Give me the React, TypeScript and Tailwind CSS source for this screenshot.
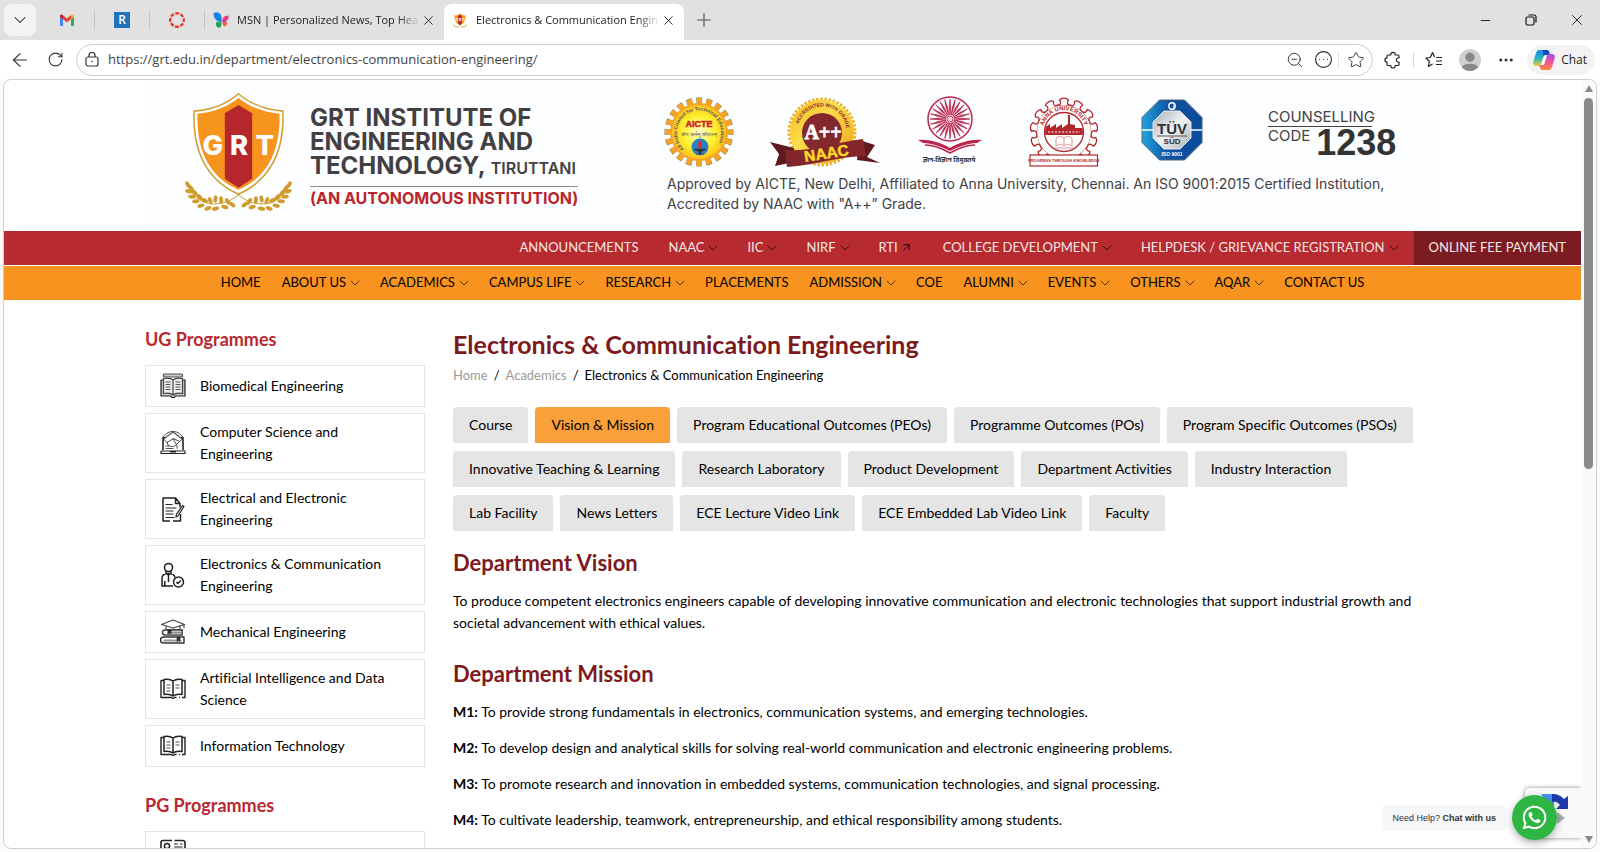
import type { ReactNode } from "react";
import {
  ArrowLeft,
  ArrowUpRight,
  ChevronDown,
  CircleEllipsis,
  Ellipsis,
  Minus,
  Plus,
  RotateCw,
  Star,
  X,
  ZoomOut,
} from "lucide-react";
import { FaWhatsapp } from "react-icons/fa";

type NavItem = { label: string; icon?: "down" | "out" };

const TOP_LINKS: NavItem[] = [
  { label: "ANNOUNCEMENTS" },
  { label: "NAAC", icon: "down" },
  { label: "IIC", icon: "down" },
  { label: "NIRF", icon: "down" },
  { label: "RTI", icon: "out" },
  { label: "COLLEGE DEVELOPMENT", icon: "down" },
  { label: "HELPDESK / GRIEVANCE REGISTRATION", icon: "down" },
];

const MAIN_LINKS: NavItem[] = [
  { label: "HOME" },
  { label: "ABOUT US", icon: "down" },
  { label: "ACADEMICS", icon: "down" },
  { label: "CAMPUS LIFE", icon: "down" },
  { label: "RESEARCH", icon: "down" },
  { label: "PLACEMENTS" },
  { label: "ADMISSION", icon: "down" },
  { label: "COE" },
  { label: "ALUMNI", icon: "down" },
  { label: "EVENTS", icon: "down" },
  { label: "OTHERS", icon: "down" },
  { label: "AQAR", icon: "down" },
  { label: "CONTACT US" },
];

const TABS = [
  "Course",
  "Vision & Mission",
  "Program Educational Outcomes (PEOs)",
  "Programme Outcomes (POs)",
  "Program Specific Outcomes (PSOs)",
  "Innovative Teaching & Learning",
  "Research Laboratory",
  "Product Development",
  "Department Activities",
  "Industry Interaction",
  "Lab Facility",
  "News Letters",
  "ECE Lecture Video Link",
  "ECE Embedded Lab Video Link",
  "Faculty",
];

const MISSIONS = [
  "To provide strong fundamentals in electronics, communication systems, and emerging technologies.",
  "To develop design and analytical skills for solving real-world communication and electronic engineering problems.",
  "To promote research and innovation in embedded systems, communication technologies, and signal processing.",
  "To cultivate leadership, teamwork, entrepreneurship, and ethical responsibility among students.",
];

/* ---------- programme icons ---------- */

const LineIcon = ({ children }: { children: ReactNode }) => (
  <svg
    viewBox="0 0 26 26"
    className="h-[26px] w-[26px] shrink-0"
    fill="none"
    stroke="#222"
    strokeWidth="1.2"
    strokeLinejoin="round"
    aria-hidden="true"
  >
    {children}
  </svg>
);

const ManualIcon = () => (
  <LineIcon>
    <rect x="3.5" y="1" width="19" height="3" rx="1" fill="#c8c8cc" stroke="#555" />
    <path d="M3 7H1v16h9.500l1 1.500h3l1-1.500H25V7h-2" fill="#c8c8cc" />
    <path d="M3.500 5.500c4-.8 7.500-.5 9.500 1.500 2-2 5.500-2.300 9.500-1.500v15c-4-.8-7.500-.5-9.500 1.500-2-2-5.500-2.300-9.500-1.500zM13 7v15" fill="#eee" stroke="#444" />
    <path d="M5.500 9h5M5.500 11.500h5M5.500 14h5M5.500 16.500h5M15.500 9h5M15.500 11.500h5M15.500 14h5M15.500 16.500h5" stroke="#555" strokeWidth="1" />
  </LineIcon>
);

const LaptopIcon = () => (
  <LineIcon>
    <path d="M3 20V9.500L13 2l10 7.500V20" stroke="#555" />
    <path d="M3 20V7.500h2M23 20V7.500h-2M1 21h24v2.500H1zM10 22h6" />
    <path d="M2.500 8C6 2.500 10 1.500 13 1.500S20 2.500 23.500 8l-4 3.500-6-3-6.500 4zM7 12l1 3c3 2 6 2 8 0l3.500-3.500M13 8.500l4 7v3" stroke="#333" strokeWidth=".9" />
    <path d="M5.500 16h4M5.500 18.500h8" stroke="#555" />
  </LineIcon>
);

const NotesIcon = () => (
  <LineIcon>
    <path d="M20 7.500 15.500 2H3v23h7M13 25h7.500v-7M15.500 2v5.500H20v4" strokeWidth="1.500" />
    <path d="M5.500 8.500h7M5.500 12h11M5.500 15h8M5.500 18h8M5.500 21.500h9" />
    <path d="m22.500 9.500 1.500 1-6 9.500-2 1 .3-2.300z" />
  </LineIcon>
);

const PersonIcon = () => (
  <LineIcon>
    <circle cx="8.500" cy="5.500" r="4" strokeWidth="1.600" />
    <path d="M6 9v3M11 9v3M13 24H2v-7.500C2 13 5 11.500 8.500 11.500s6 1.500 6.500 4M8.500 12v8M4.800 19v5" strokeWidth="1.500" />
    <path d="m7 11.500 1.500 2 1.500-2z" fill="#222" />
    <circle cx="18.500" cy="20" r="5" strokeWidth="1.500" />
    <path d="m16.300 20 1.600 1.600 3-3.200" strokeWidth="1.400" />
  </LineIcon>
);

const BooksIcon = () => (
  <LineIcon>
    <path d="M1.500 5.500 13 1l11.500 4.500L13 9zM6 7.500v3h14v-3M24 5.500V9" stroke="#444" />
    <path d="M23 11H5a2.500 2.500 0 0 0 0 5h18M22 11v5" stroke="#444" strokeWidth="1.500" />
    <path d="M7 13.500h14" stroke="#888" strokeWidth="2" />
    <path d="M24.500 18H3.500a3 3 0 0 0 0 6h21M24 18v6" stroke="#333" strokeWidth="1.500" />
    <path d="M3.500 21.500h18" stroke="#999" strokeWidth="2" />
    <path d="M8 11v4l1.500-1 1.500 1v-4zM17 18v4.500l1.500-1 1.500 1V18z" fill="#333" strokeWidth=".5" />
  </LineIcon>
);

const OpenBookIcon = () => (
  <LineIcon>
    <path d="M4 4.500H1v17h10.500l1.500 1 1.500-1h2M19 21.500h1M22 21.500h3v-17h-3" strokeWidth="1.400" />
    <path d="M4 18.500v-15c4-.8 7 0 9 1.500 2-1.500 5-2.300 9-1.500v15c-4-.5-7 0-9 1.500-2-1.500-5-2-9-1.500zM13 5v15" strokeWidth="1.500" />
    <path d="M6.500 9h4M6.500 12h4M6.500 15h4M15.500 9h4M15.500 12h4" stroke="#555" strokeWidth="1.100" />
  </LineIcon>
);

const CertificateIcon = () => (
  <LineIcon>
    <path d="M1 25V3.500C1 2 2 1.500 3 1.500h9M14.500 1.500h8c1.500 0 2.500.5 2.500 2V25" strokeWidth="1.600" />
    <circle cx="7" cy="7" r="2.600" strokeWidth="1.500" />
    <path d="M14 5h4M20 5h2.500M14 8h8.500M4 14c1-3 5-3 6 0" />
  </LineIcon>
);

const UG_PROGRAMMES = [
  { name: "Biomedical Engineering", Icon: ManualIcon },
  { name: "Computer Science and Engineering", Icon: LaptopIcon },
  { name: "Electrical and Electronic Engineering", Icon: NotesIcon },
  { name: "Electronics & Communication Engineering", Icon: PersonIcon },
  { name: "Mechanical Engineering", Icon: BooksIcon },
  { name: "Artificial Intelligence and Data Science", Icon: OpenBookIcon },
  { name: "Information Technology", Icon: OpenBookIcon },
];

/* ---------- logos ---------- */

const LAUREL_LEAVES = [
  [143, 314, 60], [154, 326, 60], [146, 334, 15], [164, 338, 50], [155, 350, 5],
  [178, 351, 45], [167, 364, -5], [193, 361, 30], [182, 377, -15], [210, 362, 70],
  [203, 385, -20], [226, 357, 100], [226, 386, -15], [243, 360, 85], [254, 381, 15],
  [262, 364, 60], [276, 374, 35],
];

const Shield = ({ className }: { className: string }) => (
  <svg viewBox="135 36 320 360" className={className} aria-hidden="true">
    {["", "translate(590 0) scale(-1 1)"].map((transform) => (
      <g key={transform} transform={transform}>
        {LAUREL_LEAVES.map(([x, y, r]) => (
          <ellipse key={`${x}-${y}`} cx={x} cy={y} rx="11" ry="6" fill="#cf9c2e" transform={`rotate(${r} ${x} ${y})`} />
        ))}
        <path d="M142 312c10 32 40 60 78 60 30 0 55-10 82-32" fill="none" stroke="#cf9c2e" strokeWidth="3" />
      </g>
    ))}
    <path d="M295 39c38 32 84 50 135 52 6 110-28 206-135 254C188 297 154 201 160 91c51-2 97-20 135-52z" fill="#cf9c2e" />
    <path d="M295 44c38 31 82 48 131 51 4 106-29 199-131 245C193 294 160 201 164 95c49-3 93-20 131-51z" fill="#fff" />
    <path d="M295 54c36 28 76 43 123 47 3 100-28 187-123 228C200 288 169 201 172 101c47-4 87-19 123-47z" fill="#f7941d" />
    <path d="m295 75 41 25v196l-41 27-41-27V100z" fill="#b5272d" />
    <g fill="#fff" fontFamily="Inter, sans-serif" fontSize="82" fontWeight="800" textAnchor="middle">
      <text x="218" y="225">G</text>
      <text x="297" y="225">R</text>
      <text x="374" y="225">T</text>
    </g>
  </svg>
);

const AicteBadge = () => (
  <svg viewBox="-35 -36 70 72" className="h-[72px] w-[70px]" aria-hidden="true">
    <defs>
      <radialGradient id="aicte">
        <stop offset="0" stopColor="#fffbd0" />
        <stop offset=".6" stopColor="#fff12e" />
        <stop offset="1" stopColor="#f9c41b" />
      </radialGradient>
      <path id="aicte-arc" d="M-14 17.500A22 22 0 1 1 14 17.500" />
    </defs>
    <circle r="31" fill="none" stroke="#8a7a50" strokeWidth="7" strokeDasharray="5.700 4.040" strokeDashoffset="2.850" />
    <circle r="31" fill="none" stroke="#f5a326" strokeWidth="6" strokeDasharray="5.200 4.540" strokeDashoffset="2.600" />
    <circle r="29" fill="#f5a326" />
    <circle r="27" fill="url(#aicte)" />
    <text fontFamily="Liberation Sans, sans-serif" fontSize="5" fontWeight="700" fill="#55536b">
      <textPath href="#aicte-arc" startOffset="1">All India Council for Technical Education</textPath>
    </text>
    <text y="-5" textAnchor="middle" fontFamily="Liberation Sans, sans-serif" fontSize="9" fontWeight="700" fill="#d3202a" stroke="#d3202a" strokeWidth=".5">AICTE</text>
    <text y="4" textAnchor="middle" fontFamily="Noto Sans, sans-serif" fontSize="5" fill="#555">योगः कर्मसु कौशलम्</text>
    <circle cx="1" cy="15" r="8.500" fill="#2c7fc0" />
    <path d="M1 8c2 3 2.500 5 1 8H0c-1.500-3-1-5 1-8z" fill="#e2262b" />
    <path d="M-5 17h12l-3 2H-2zM0 18h2v4h-2zM-3 22h8" fill="#333" stroke="#333" strokeWidth=".5" />
  </svg>
);

const NaacBadge = () => (
  <svg viewBox="-52 -36 110 72" className="h-[72px] w-[110px]" aria-hidden="true">
    <defs>
      <linearGradient id="naac" x1="0" y1="0" x2="1" y2="1">
        <stop offset="0" stopColor="#f4b81f" />
        <stop offset=".4" stopColor="#fddc4b" />
        <stop offset="1" stopColor="#ee9f17" />
      </linearGradient>
      <path id="naac-arc" d="M-24.500 -1A24.500 24.500 0 0 1 24.500 -1" />
    </defs>
    <circle r="33" fill="none" stroke="#efb01f" strokeWidth="3" strokeDasharray="2.400 1.750" />
    <circle r="32" fill="url(#naac)" />
    <circle r="20" cy="1" fill="#83292e" />
    <text fontFamily="Liberation Sans, sans-serif" fontSize="5" fontWeight="700" fill="#83292e">
      <textPath href="#naac-arc" startOffset="7">ACCREDITED WITH GRADE</textPath>
    </text>
    <text x="1" y="7" textAnchor="middle" fontFamily="Liberation Serif, serif" fontSize="20" fontWeight="700" fill="#fff" stroke="#fff" strokeWidth=".8">A++</text>
    <path d="m-52 10 24 6v14l-19 4 4-12zM58 31 45 25l8-12-16-5-2 20z" fill="#5e1a1f" />
    <path d="M-37 18C-12 20 14 10 41 7l3 17c-26 0-50 9-79 11z" fill="#84272d" />
    <text transform="rotate(-9)" x="1" y="27" textAnchor="middle" fontFamily="Liberation Sans, sans-serif" fontSize="15.500" fontWeight="700" fill="#fbd928" stroke="#fbd928" strokeWidth=".5">NAAC</text>
  </svg>
);

const SPOKES = Array.from({ length: 24 }, (_, i) => i * 15);

const UgcBadge = () => (
  <svg viewBox="-34 -36 72 72" className="h-[72px] w-[72px]" aria-hidden="true">
    <g transform="translate(0 -13)" fill="none" stroke="#b9254d">
      <circle r="22" strokeWidth="1.500" />
      {SPOKES.map((angle) => (
        <path key={angle} d="M0-4 .7-12 0-20-.7-12z" fill="#b9254d" strokeWidth=".7" transform={`rotate(${angle})`} />
      ))}
      <circle r="3" fill="#f7c9d5" strokeWidth=".8" />
    </g>
    <path d="M-32 8c10-1 22 2 32 8C10 10 22 7 32 8l-5 3C18 11 8 15 0 19c-8-4-18-8-27-8z" fill="#b9254d" />
    <path d="M-25 13c9 0 18 4 25 8 7-4 16-8 25-8" fill="none" stroke="#b9254d" strokeWidth="1.600" />
    <text x="-1" y="30" textAnchor="middle" fontFamily="Noto Sans, sans-serif" fontSize="6.500" fontWeight="700" fill="#333">ज्ञान-विज्ञान विमुक्तये</text>
  </svg>
);

const GEAR_TEETH = Array.from({ length: 11 }, (_, i) => -135 + i * 27);

const AnnaBadge = () => (
  <svg viewBox="-40 -36 76 72" className="h-[72px] w-[76px]" aria-hidden="true">
    <defs>
      <path id="anna-arc" d="M-21 -1A21 21 0 0 1 21 -1" />
      <clipPath id="anna-clip">
        <circle r="19" />
      </clipPath>
    </defs>
    <g fill="#fff" stroke="#b3272c" strokeWidth="1.300">
      <circle r="27.500" />
      {GEAR_TEETH.map((angle) => (
        <path key={angle} d="M-5-27c2-1 2-3 .5-5 1.500-2.500 7.500-2.500 9 0-1.500 2-1.500 4 .5 5" transform={`rotate(${angle})`} />
      ))}
      <circle r="19.500" />
    </g>
    <text fontFamily="Liberation Sans, sans-serif" fontSize="6" fontWeight="700" fill="#b3272c">
      <textPath href="#anna-arc" startOffset="5">ANNA UNIVERSITY</textPath>
    </text>
    <g clipPath="url(#anna-clip)">
      <path d="M-20 3V-4l6-4v4l6-4v4l6-4v4l6-4v-9h2v9l5 1v3h10v7z" fill="#b3272c" />
      <path d="M-16 0h32" stroke="#fff" strokeDasharray="2 1.500" />
    </g>
    <path d="M-8 14c3-2 6-2 8 0 2-2 5-2 8 0V6C5 4 2 4 0 6c-2-2-5-2-8 0zM0 6v8M-10 16h20" fill="none" stroke="#d9898b" strokeWidth=".9" />
    <rect x="-34" y="23" width="67.500" height="11" fill="#fff" stroke="#b3272c" strokeWidth="1.200" />
    <text y="30" textAnchor="middle" fontFamily="Liberation Sans, sans-serif" fontSize="4" fontWeight="700" fill="#b3272c">PROGRESS THROUGH KNOWLEDGE</text>
  </svg>
);

const TuvBadge = () => (
  <svg viewBox="-36 -34 72 72" className="h-[72px] w-[72px]" aria-hidden="true">
    <defs>
      <linearGradient id="tuv">
        <stop offset="0" stopColor="#22a5e0" />
        <stop offset=".45" stopColor="#0e50a0" />
        <stop offset="1" stopColor="#0b4b9b" />
      </linearGradient>
      <linearGradient id="tuv-steel" x1="0" y1="0" x2="1" y2="1">
        <stop offset="0" stopColor="#a9adb2" />
        <stop offset=".5" stopColor="#f1f2f4" />
        <stop offset="1" stopColor="#a9adb2" />
      </linearGradient>
    </defs>
    <path d="M-12.500-30h25l17.500 17.500v25L12.500 30h-25L-30 12.500v-25z" fill="url(#tuv)" stroke="#4e6478" />
    <path d="M-30 0h60" stroke="#fff" strokeWidth="1.500" />
    <path d="M-8-19H8L19-8V8L8 19H-8L-19 8V-8z" fill="url(#tuv-steel)" stroke="#fff" strokeWidth=".8" />
    <circle cy="-24" r="3.200" fill="none" stroke="#fff" strokeWidth="1.400" />
    <path d="M2-25.500v5" stroke="#fff" strokeWidth="1.200" />
    <g textAnchor="middle" fontFamily="Liberation Sans, sans-serif" fontWeight="700" fill="#2d3238">
      <text y="4" fontSize="15">TÜV</text>
      <text y="14" fontSize="8">SÜD</text>
      <text y="26" fontSize="5" fill="#fff">ISO 9001</text>
    </g>
    <path d="M-15 6h30" stroke="#2d3238" strokeWidth=".8" />
  </svg>
);

/* ---------- browser chrome ---------- */

const GmailIcon = () => (
  <svg viewBox="0 0 16 12" className="h-3 w-4" aria-hidden="true">
    <path d="M1 2.500 4 4.800V12H2a1 1 0 0 1-1-1z" fill="#4285f4" />
    <path d="M12 4.800 15 2.500V11a1 1 0 0 1-1 1h-2z" fill="#34a853" />
    <path d="M4 1.300 8 4.400l4-3.100v3.900L8 8.300 4 5.200z" fill="#ea4335" />
    <path d="M1 2C1 .4 2.700-.3 4 1.300v3.900L1 3z" fill="#c5221f" />
    <path d="M15 2c0-1.600-1.700-2.300-3-.7v3.900L15 3z" fill="#fbbc04" />
  </svg>
);

const MsnIcon = () => (
  <svg viewBox="0 0 16 16" className="h-4 w-4 shrink-0" aria-hidden="true">
    <path d="M.5 1.500C3.500-.8 7 .5 8.200 4c.6 2 .5 4 .2 6.200C4.500 10 .5 7 .5 1.500z" fill="#1583e0" />
    <path d="M3.500 9.500c1.500.8 3 1 4.900.7.200 2-.1 4-1.400 5.300-2 .5-4-.5-4-3 0-1 0-2 .5-3z" fill="#1f9d55" />
    <path d="M9.300 8.800c.2-3.500 3-5.500 6.200-5 .5 2.500-.5 4.300-2 5C12 9.200 10.500 9 9.300 9.500z" fill="#ee3b78" />
    <path d="M9.500 10c1.500-1 3.500-1 4.500.3.300 2-.5 3.700-2.500 4.200-1.300-.8-2-2.500-2-4.500z" fill="#f4604c" />
    <path d="M9.500 8.800c1.500-.8 3-.9 4.500-.3L10 10.500z" fill="#a53ae0" />
  </svg>
);

const CopilotIcon = () => (
  <svg viewBox="0 0 22 20" className="h-5 w-[22px]" aria-hidden="true">
    <defs>
      <linearGradient id="cop-a" x1="0" y1="0" x2="0" y2="1">
        <stop offset="0" stopColor="#1a86f0" />
        <stop offset=".5" stopColor="#25b5c0" />
        <stop offset="1" stopColor="#f2d02b" />
      </linearGradient>
      <linearGradient id="cop-b" x1="0" y1="0" x2="0" y2="1">
        <stop offset="0" stopColor="#9a56f0" />
        <stop offset=".5" stopColor="#f0529a" />
        <stop offset="1" stopColor="#fb8a3c" />
      </linearGradient>
    </defs>
    <path d="M6 0h8l2 5h-3c-1.500 0-2 .8-2.500 2L8 14.500c-.5 1-1 1.500-2.500 1.500H3c-2.500 0-3.500-2-2.500-5l2.500-8C3.500 1.500 4.500 0 6 0z" fill="url(#cop-a)" />
    <path d="M10 0h4.500c1 0 1.500 1 2 3l.7 2H13c-1.500 0-2 1-2.500 2z" fill="#1546c4" />
    <path d="M16 20H8l-2-5h3c1.500 0 2-.8 2.500-2L14 5.500c.5-1 1-1.500 2.500-1.500H19c2.500 0 3.500 2 2.500 5L19 17c-.5 1.500-1.500 3-3 3z" fill="url(#cop-b)" />
    <path d="m10.500 7 1-1.800h2L11.500 13l-1 2H8.500z" fill="#fff" />
  </svg>
);

const TabStrip = () => (
  <div className="flex h-10 shrink-0 items-center bg-[#e1e1e1] pl-1 text-[11px] text-[#222]">
    <button aria-label="Tab actions" className="flex h-8 w-8 items-center justify-center rounded-lg bg-[#f3f3f3]">
      <ChevronDown size={20} strokeWidth={1.25} />
    </button>
    <button aria-label="Gmail" className="ml-1 flex h-5 w-[55px] items-center justify-center border-r border-[#c4c4c4]">
      <GmailIcon />
    </button>
    <button aria-label="Reader" className="flex h-5 w-[55px] items-center justify-center border-r border-[#c4c4c4]">
      <span className="flex h-4 w-4 items-center justify-center bg-[#1e73be] text-[12px] font-semibold text-white">R</span>
    </button>
    <button aria-label="Canvas" className="flex h-5 w-[55px] items-center justify-center border-r border-[#c4c4c4]">
      <svg viewBox="0 0 16 16" className="h-4 w-4" aria-hidden="true">
        <circle cx="8" cy="8" r="6.800" fill="none" stroke="#e13c2f" strokeWidth="2.400" strokeDasharray="3.800 1.540" strokeDashoffset="1.900" />
      </svg>
    </button>
    <div className="flex w-[239px] items-center pl-2">
      <MsnIcon />
      <span className="ml-2 flex-1 overflow-hidden whitespace-nowrap [mask-image:linear-gradient(to_right,black_88%,transparent)]">
        MSN | Personalized News, Top Headlines
      </span>
      <button aria-label="Close tab" className="mr-2 flex w-4 justify-center">
        <X size={15} strokeWidth={1.5} />
      </button>
    </div>
    <div className="flex h-9 w-[240px] items-center self-end rounded-t-lg bg-white pb-[3px] pl-2">
      <Shield className="h-[15px] w-4 shrink-0" />
      <span className="ml-2 flex-1 overflow-hidden whitespace-nowrap [mask-image:linear-gradient(to_right,black_88%,transparent)]">
        Electronics &amp; Communication Engineering
      </span>
      <button aria-label="Close tab" className="mr-2 flex w-4 justify-center">
        <X size={15} strokeWidth={1.5} />
      </button>
    </div>
    <button aria-label="New tab" className="ml-[2px] flex w-9 justify-center text-[#555]">
      <Plus size={22} strokeWidth={1.25} />
    </button>
    <div className="ml-auto flex items-center">
      <button aria-label="Minimize" className="flex w-[46px] justify-center">
        <Minus size={15} strokeWidth={1.5} />
      </button>
      <button aria-label="Restore" className="flex w-[46px] justify-center">
        <svg viewBox="0 0 12 12" className="h-3 w-3" fill="none" stroke="#111" strokeWidth="1.200" aria-hidden="true">
          <rect x="1" y="3" width="8" height="8" rx="1.500" />
          <path d="M3.500 1H9a2 2 0 0 1 2 2v5.500" />
        </svg>
      </button>
      <button aria-label="Close window" className="flex w-[46px] justify-center">
        <X size={18} strokeWidth={1.25} />
      </button>
    </div>
  </div>
);

const Toolbar = () => (
  <div className="flex h-[39px] shrink-0 items-center bg-white pr-[5px] text-[#333]">
    <button aria-label="Back" className="flex w-10 justify-center">
      <ArrowLeft size={22} strokeWidth={1.25} />
    </button>
    <button aria-label="Refresh" className="mr-[6px] flex w-[30px] justify-center">
      <RotateCw size={17} strokeWidth={1.5} />
    </button>
    <div className="flex h-8 flex-1 items-center rounded-full border border-[#cfcfcf] pl-2">
      <svg viewBox="0 0 14 16" className="h-4 w-[14px]" fill="none" stroke="#333" strokeWidth="1.200" aria-hidden="true">
        <rect x="1" y="5" width="12" height="9" rx="2" />
        <path d="M4 5V3.500a3 3 0 0 1 6 0V5" />
        <circle cx="7" cy="9.500" r=".8" fill="#333" stroke="none" />
      </svg>
      <input
        aria-label="Address"
        defaultValue="https://grt.edu.in/department/electronics-communication-engineering/"
        className="ml-[9px] min-w-0 flex-1 bg-transparent text-[13px] text-[#444] outline-none"
      />
      <button aria-label="Zoom out" className="flex w-7 justify-center">
        <ZoomOut size={18} strokeWidth={1.25} />
      </button>
      <button aria-label="More page actions" className="flex w-7 justify-center">
        <CircleEllipsis size={19} strokeWidth={1.5} />
      </button>
      <span className="mx-px h-4 w-px bg-[#e2e2e2]" />
      <button aria-label="Favourite" className="flex w-8 justify-center">
        <Star size={18} strokeWidth={1.25} />
      </button>
    </div>
    <button aria-label="Extensions" className="ml-[2px] flex w-9 justify-center">
      <svg viewBox="0 0 18 18" className="h-[18px] w-[18px]" fill="none" stroke="#222" strokeWidth="1.200" strokeLinejoin="round" aria-hidden="true">
        <path d="M4 4h2.800C6.500 2.500 7.500 1.300 9 1.300S11.500 2.500 11.200 4H14c.6 0 1 .4 1 1v2c-1.500-.3-2.600.6-2.600 2s1.100 2.300 2.600 2v2.500c0 .6-.4 1-1 1h-2.800c.3 1.500-.7 2.500-2.200 2.500s-2.500-1-2.200-2.500H4c-.6 0-1-.4-1-1v-2.400C1.700 11 .9 10.300.9 9s.8-2.200 2.100-2.200V5c0-.6.400-1 1-1z" />
      </svg>
    </button>
    <span className="mx-[2px] h-4 w-px bg-[#dcdcdc]" />
    <button aria-label="Favourites" className="flex w-9 justify-center">
      <svg viewBox="0 0 18 18" className="h-[18px] w-[18px]" fill="none" stroke="#222" strokeWidth="1.200" strokeLinejoin="round" aria-hidden="true">
        <path d="M9.500 6 7.500 1.500 5.300 6.500.9 7l3.400 3.300L3.400 15.500 7.500 13M11 6.500h6M11 10h6M11 13.500h6" />
      </svg>
    </button>
    <button aria-label="Profile" className="flex w-9 justify-center">
      <svg viewBox="0 0 22 22" className="h-[22px] w-[22px]" aria-hidden="true">
        <circle cx="11" cy="11" r="11" fill="#d2d0ce" />
        <circle cx="11" cy="8.300" r="4.700" fill="#8a8886" />
        <path d="M3 18.500c1-5 15-5 16 0a11 11 0 0 1-16 0z" fill="#8a8886" />
      </svg>
    </button>
    <button aria-label="Settings" className="mr-[3px] flex w-9 justify-center">
      <Ellipsis size={18} strokeWidth={2} />
    </button>
    <button className="flex h-[30px] items-center gap-[6px] rounded-full bg-[#f3f3f3] pl-[6px] pr-2 text-[12px] text-[#222]">
      <CopilotIcon />
      Chat
    </button>
  </div>
);

/* ---------- page ---------- */

const NavIcon = ({ icon }: { icon?: "down" | "out" }) => {
  if (icon === "down") return <ChevronDown size={16} strokeWidth={1.25} className="-mr-1 text-black/80" />;
  if (icon === "out") return <ArrowUpRight size={13} strokeWidth={1.5} className="ml-px text-black" />;
  return null;
};

const NavLinks = ({ items }: { items: NavItem[] }) => (
  <>
    {items.map(({ label, icon }) => (
      <a key={label} href="#" className="flex items-center gap-px whitespace-nowrap pb-px">
        {label}
        <NavIcon icon={icon} />
      </a>
    ))}
  </>
);

const Header = () => (
  <header>
    <div className="mx-auto flex h-[151px] max-w-[1295px] items-start bg-[#fdfeff] px-10 pt-3 font-[Inter,sans-serif] text-[#444042]">
      <Shield className="h-[120px] w-[107px] shrink-0" />
      <div className="ml-[18px] pt-[14px]">
        <p className="text-[24px] font-bold leading-6">
          GRT INSTITUTE OF
          <br />
          ENGINEERING AND
          <br />
          TECHNOLOGY, <span className="text-[16px] font-semibold">TIRUTTANI</span>
        </p>
        <p className="mt-[6px] border-t border-[#8b8b8b] pt-px text-[16px] font-bold leading-5 text-[#b9252c]">
          (AN AUTONOMOUS INSTITUTION)
        </p>
      </div>
      <div className="ml-auto w-[736px] pt-1">
        <div className="flex gap-9">
          <AicteBadge />
          <NaacBadge />
          <UgcBadge />
          <AnnaBadge />
          <TuvBadge />
          <div className="ml-6 w-[130px] pt-3 text-[15px] leading-[18px]">
            <p className="w-[104px] border-b border-[#444042]">COUNSELLING</p>
            <p className="flex gap-[6px]">
              CODE
              <span className="font-['Liberation_Sans',sans-serif] text-[36px] font-bold leading-8 text-[#333]">1238</span>
            </p>
          </div>
        </div>
        <p className="mt-[6px] whitespace-nowrap pl-[3px] text-[14px] leading-5">
          Approved by AICTE, New Delhi, Affiliated to Anna University, Chennai. An ISO 9001:2015 Certified Institution,
          <br />
          Accredited by NAAC with &quot;A++&rdquo; Grade.
        </p>
      </div>
    </div>
    <nav aria-label="Utility" className="flex h-[34px] items-center justify-end gap-[30px] bg-[#b72a30] text-[13px] text-[#f4e6e6]">
      <NavLinks items={TOP_LINKS} />
      <a href="#" className="-ml-[14px] flex h-full items-center bg-[#7c1c22] px-[15px] pb-px">ONLINE FEE PAYMENT</a>
    </nav>
    <nav aria-label="Main" className="mt-px flex h-[34px] items-center justify-center gap-[21px] bg-[#f8931f] text-[13px]">
      <NavLinks items={MAIN_LINKS} />
    </nav>
  </header>
);

const ProgrammeCard = ({ name, Icon }: { name: string; Icon: () => ReactNode }) => (
  <li>
    <a href="#" className="flex items-center gap-[14px] border border-[#e4e4e4] py-[7px] pl-[14px] pr-6 text-[14px] leading-[22px]">
      <Icon />
      {name}
    </a>
  </li>
);

const Sidebar = () => (
  <aside className="w-[280px] shrink-0 pt-[26px]">
    <h2 className="text-[18px] font-bold leading-[26px] text-[#b9292f]">UG Programmes</h2>
    <ul className="mt-[13px] flex flex-col gap-[6px]">
      {UG_PROGRAMMES.map((item) => (
        <ProgrammeCard key={item.name} {...item} />
      ))}
    </ul>
    <h2 className="mt-[25px] text-[18px] font-bold leading-[26px] text-[#b9292f]">PG Programmes</h2>
    <ul className="mt-[13px]">
      <ProgrammeCard name="" Icon={CertificateIcon} />
    </ul>
  </aside>
);

const Department = () => (
  <main className="min-w-0 flex-1 pt-[27px] text-[14px] leading-[22px]">
    <h1 className="text-[25px] font-bold leading-[34px] text-[#7d1a20]">Electronics &amp; Communication Engineering</h1>
    <nav aria-label="Breadcrumb" className="mt-[3px] flex gap-[6px] text-[13px]">
      <a href="#" className="text-[#999]">Home</a>
      <span>/</span>
      <a href="#" className="text-[#999]">Academics</a>
      <span>/</span>
      <span>Electronics &amp; Communication Engineering</span>
    </nav>
    <div className="mt-[21px] flex flex-wrap gap-x-[7px] gap-y-2">
      {TABS.map((tab) => (
        <button
          key={tab}
          className={`h-9 rounded-t px-4 ${tab === "Vision & Mission" ? "bg-[#f9a03a]" : "bg-[#e5e5e5]"}`}
        >
          {tab}
        </button>
      ))}
    </div>
    <h2 className="mt-4 text-[22px] font-bold leading-8 text-[#7d1a20]">Department Vision</h2>
    <p className="mt-[11px]">
      To produce competent electronics engineers capable of developing innovative communication and electronic
      technologies that support industrial growth and societal advancement with ethical values.
    </p>
    <h2 className="mt-6 text-[22px] font-bold leading-8 text-[#7d1a20]">Department Mission</h2>
    <div className="mt-[11px] flex flex-col gap-[14px]">
      {MISSIONS.map((text, i) => (
        <p key={text}>
          <b>M{i + 1}:</b> {text}
        </p>
      ))}
    </div>
  </main>
);

const ChatWidget = () => (
  <>
    <div className="absolute bottom-[10px] right-0 h-[50px] w-[56px] rounded-l-sm bg-[#f9f9f9] shadow-[0_0_4px_#888]">
      <svg viewBox="0 0 56 50" className="h-full w-full" aria-hidden="true">
        <path d="M16 6h13v12h-5z" fill="#4a90f5" />
        <path d="M27 6c6 0 9 2 12 5l4-3v13H31l4-4c-2-3-5-4-8-3z" fill="#1c3aa9" />
        <path d="m32 24 8 6-8 6z" fill="#ababab" />
      </svg>
    </div>
    <div className="absolute bottom-2 right-6 flex items-center gap-[6px]">
      <span className="rounded bg-[#f5f7f9] px-[10px] font-['Liberation_Sans',sans-serif] text-[9px] leading-[26px] text-[#333]">
        Need Help? <b>Chat with us</b>
      </span>
      <button aria-label="Chat on WhatsApp" className="flex h-[45px] w-[45px] items-center justify-center rounded-full bg-[#2db742] text-white shadow-[0_3px_8px_rgba(0,0,0,0.3)]">
        <FaWhatsapp size={27} />
      </button>
    </div>
  </>
);

export default function App() {
  return (
    <div className="flex h-screen flex-col overflow-hidden bg-[#fbfbfb] font-['Open_Sans',sans-serif]">
      <TabStrip />
      <Toolbar />
      <div className="mx-[3px] mb-[3px] flex min-h-0 flex-1 overflow-hidden rounded-lg border border-[#cfcfcf] bg-white">
        <div className="relative min-w-0 flex-1 overflow-hidden font-[Lato,sans-serif] text-black [font-variant-ligatures:none]">
          <Header />
          <div className="mx-auto flex max-w-[1295px] gap-7">
            <Sidebar />
            <Department />
          </div>
          <ChatWidget />
        </div>
        <div className="flex w-[15px] shrink-0 flex-col items-center bg-[#fafafa] py-[5px]">
          <svg viewBox="0 0 8 7" className="h-[7px] w-2" aria-hidden="true">
            <path d="M4 0 8 7H0z" fill="#8a8a8a" />
          </svg>
          <div className="mt-[6px] h-[49%] w-[9px] rounded-full bg-[#8a8a8a]" />
          <svg viewBox="0 0 8 7" className="mt-auto h-[7px] w-2" aria-hidden="true">
            <path d="M4 7 0 0h8z" fill="#8a8a8a" />
          </svg>
        </div>
      </div>
    </div>
  );
}
